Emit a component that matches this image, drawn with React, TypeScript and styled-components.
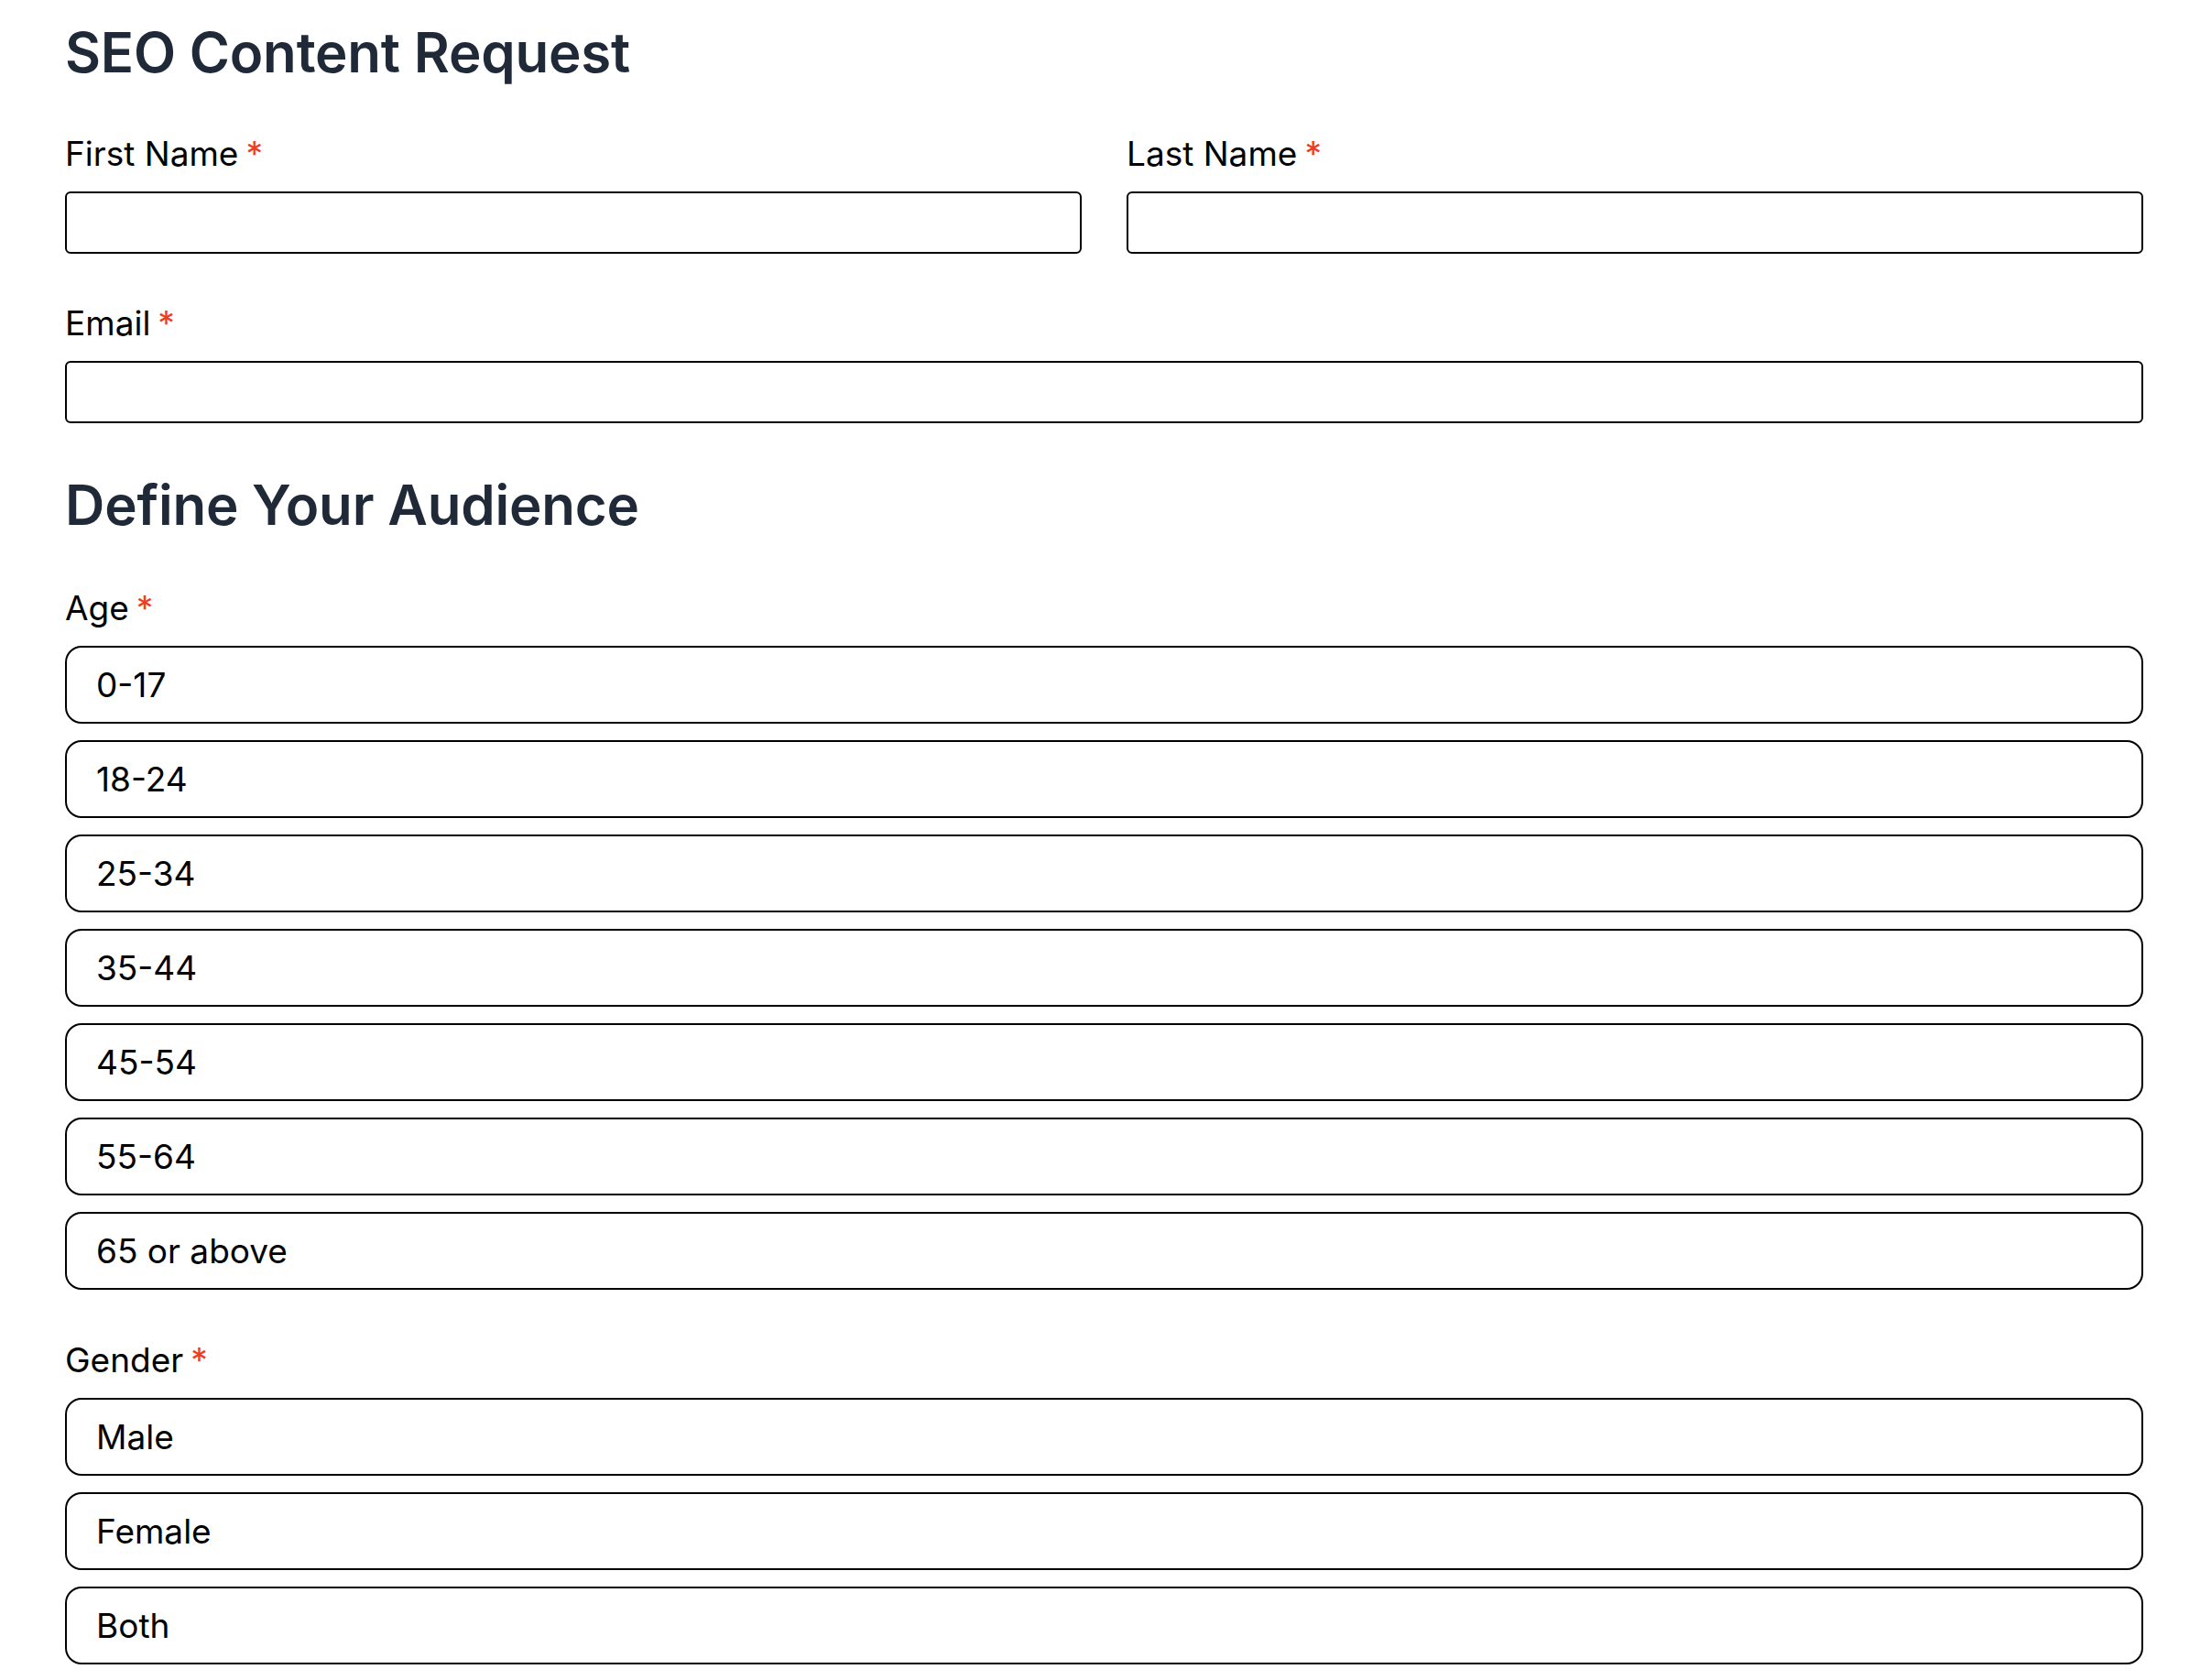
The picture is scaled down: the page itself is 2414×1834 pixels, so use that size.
import React from "react";
import styled, { createGlobalStyle } from "styled-components";

const GlobalStyle = createGlobalStyle`
  html, body {
    margin: 0;
    padding: 0;
    background: #ffffff;
  }
  body {
    font-family: Inter, "Noto Sans", "Liberation Sans", sans-serif;
    color: #000000;
  }
  * { box-sizing: border-box; }
`;

const Page = styled.form`
  padding: 23px 74px 40px 71px;
  display: flex;
  flex-direction: column;
`;

const Heading = styled.h1<{ $top?: number }>`
  margin: ${(p) => p.$top ?? 0}px 0 0 0;
  font-family: Inter, "Noto Sans", sans-serif;
  font-weight: 600;
  font-size: 60px;
  line-height: 68px;
  color: #1f2937;
  letter-spacing: -0.2px;
`;

const Row = styled.div`
  display: grid;
  grid-template-columns: 1fr 1fr;
  column-gap: 49px;
`;

const Field = styled.div<{ $top: number }>`
  display: flex;
  flex-direction: column;
  margin-top: ${(p) => p.$top}px;
`;

const Label = styled.label`
  font-family: Inter, "Noto Sans", sans-serif;
  font-size: 37px;
  line-height: 43px;
  font-weight: 400;
  color: #000;
  margin-bottom: 20px;
`;

const Required = styled.span`
  color: #ee3d22;
  margin-left: 8px;
`;

const TextInput = styled.input`
  height: 68px;
  width: 100%;
  border: 2px solid #000;
  border-radius: 6px;
  background: #fff;
  font-family: Inter, sans-serif;
  font-size: 32px;
  padding: 0 16px;
  outline: none;
`;

const OptionList = styled.div`
  display: flex;
  flex-direction: column;
  gap: 18px;
`;

const OptionCard = styled.label`
  position: relative;
  height: 85px;
  display: flex;
  align-items: center;
  border: 2px solid #000;
  border-radius: 18px;
  padding: 0 32px;
  font-family: Inter, "Noto Sans", sans-serif;
  font-size: 37px;
  color: #000;
  cursor: pointer;
  background: #fff;
`;

const HiddenRadio = styled.input`
  position: absolute;
  opacity: 0;
  width: 0;
  height: 0;
`;

const ages = ["0-17", "18-24", "25-34", "35-44", "45-54", "55-64", "65 or above"];
const genders = ["Male", "Female", "Both"];

function Choice({ name, options }: { name: string; options: string[] }) {
  return (
    <OptionList>
      {options.map((o) => (
        <OptionCard key={o}>
          <HiddenRadio type="radio" name={name} value={o} />
          {o}
        </OptionCard>
      ))}
    </OptionList>
  );
}

export default function App() {
  return (
    <>
      <GlobalStyle />
      <Page onSubmit={(e) => e.preventDefault()}>
        <Heading>SEO Content Request</Heading>
        <Field $top={55}>
          <Row>
            <Field $top={0}>
              <Label>
                First Name<Required>*</Required>
              </Label>
              <TextInput type="text" />
            </Field>
            <Field $top={0}>
              <Label>
                Last Name<Required>*</Required>
              </Label>
              <TextInput type="text" />
            </Field>
          </Row>
        </Field>
        <Field $top={54}>
          <Label>
            Email<Required>*</Required>
          </Label>
          <TextInput type="email" />
        </Field>
        <Heading as="h2" $top={55}>
          Define Your Audience
        </Heading>
        <Field $top={57}>
          <Label>
            Age<Required>*</Required>
          </Label>
          <Choice name="age" options={ages} />
        </Field>
        <Field $top={55}>
          <Label>
            Gender<Required>*</Required>
          </Label>
          <Choice name="gender" options={genders} />
        </Field>
      </Page>
    </>
  );
}
